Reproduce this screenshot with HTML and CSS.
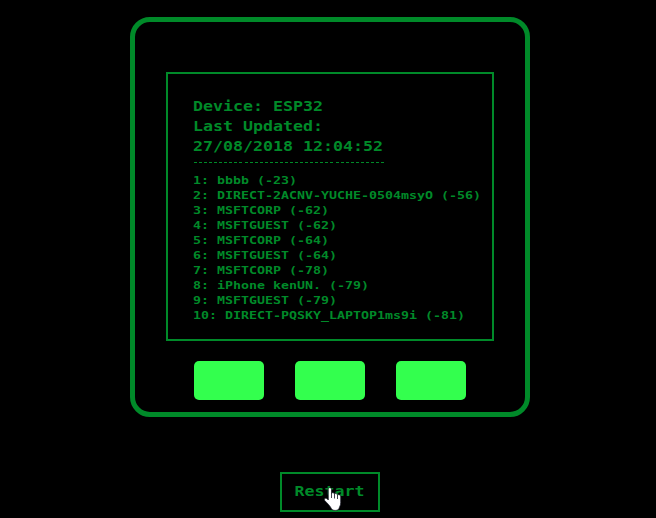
FILE: index.html
```html
<!DOCTYPE html>
<html lang="en">
<head>
<meta charset="utf-8">
<title>Device</title>
<link rel="stylesheet" href="styles.css">
</head>
<body>
<main class="device">
  <section class="screen">
    <div class="info">
      <div>Device: ESP32</div>
      <div>Last Updated:</div>
      <div>27/08/2018 12:04:52</div>
    </div>
    <div class="divider"></div>
    <div class="networks">
      <div>1: bbbb (-23)</div>
      <div>2: DIRECT-2ACNV-YUCHE-0504msyO (-56)</div>
      <div>3: MSFTCORP (-62)</div>
      <div>4: MSFTGUEST (-62)</div>
      <div>5: MSFTCORP (-64)</div>
      <div>6: MSFTGUEST (-64)</div>
      <div>7: MSFTCORP (-78)</div>
      <div>8: iPhone kenUN. (-79)</div>
      <div>9: MSFTGUEST (-79)</div>
      <div>10: DIRECT-PQSKY_LAPTOP1ms9i (-81)</div>
    </div>
  </section>
  <div class="keys">
    <div class="key"></div>
    <div class="key"></div>
    <div class="key"></div>
  </div>
</main>
<button class="restart"><span class="restart-label">Restart</span>
  <svg class="pointer" width="20" height="26" viewBox="0 0 20 26">
    <path d="M6.500 .7C7.800 .5 8.500 1.300 8.500 2.500V6.200C9.500 5.300 11.200 5.700 11.500 6.900C12.700 6.100 14.200 6.700 14.500 7.900C16 7.200 17.700 8 17.700 9.800V15.500C17.700 18.500 16.500 19.500 16 21.500C15 24 9.500 24 8.500 21.800C7 18.500 3.500 15.500 1.700 13.500C.8 12 2.200 10.700 3.800 11.500L5.300 13V2.500C5.300 1.500 5.600 .9 6.500 .7Z" fill="#fff" stroke="#111320" stroke-width=".7"/>
    <path d="M8.500 6V11M11.500 7V11.500M14.500 8V12" stroke="#111320" stroke-width=".8" fill="none"/>
  </svg>
</button>
</body>
</html>
```
FILE: styles.css
```css
* { box-sizing: border-box; }
body {
  margin: 0;
  height: 518px;
  padding: 17px 0 0 130px;
  overflow: hidden;
  background: #000;
  color: #008a29;
  font-family: "DejaVu Sans Mono", monospace;
}
.device {
  width: 400px;
  height: 400px;
  border: 5px solid #008a29;
  border-radius: 20px;
  padding: 50px 31px 0;
}
.screen {
  width: 328px;
  height: 269px;
  border: 2px solid #008a29;
  padding: 22px 0 0 25px;
  white-space: nowrap;
}
.info {
  width: 200px;
  font-size: 14px;
  font-weight: bold;
  line-height: 20px;
  transform: scaleX(1.186);
  transform-origin: 0 0;
}
.divider {
  width: 190px;
  height: 1px;
  margin: 6px 0 0 1px;
  background: repeating-linear-gradient(90deg, #008a29 0 3px, transparent 3px 5.054px);
}
.networks {
  width: 220px;
  margin-top: 10px;
  font-size: 10px;
  font-weight: bold;
  line-height: 15px;
  transform: scaleX(1.329);
  transform-origin: 0 0;
}
.keys {
  display: flex;
  gap: 31px;
  margin: 20px 0 0 28px;
}
.key {
  width: 70px;
  height: 39px;
  border-radius: 5px;
  background: #33ff4e;
}
.restart {
  position: relative;
  display: flex;
  align-items: center;
  justify-content: center;
  width: 100px;
  height: 40px;
  margin: 55px 0 0 150px;
  padding: 0 0 2px;
  border: 2px solid #008a29;
  background: #000;
  color: #008a29;
  font: bold 14px "DejaVu Sans Mono", monospace;
}
.restart-label { transform: scaleX(1.186); }
.pointer {
  position: absolute;
  left: 41px;
  top: 13px;
}
```
